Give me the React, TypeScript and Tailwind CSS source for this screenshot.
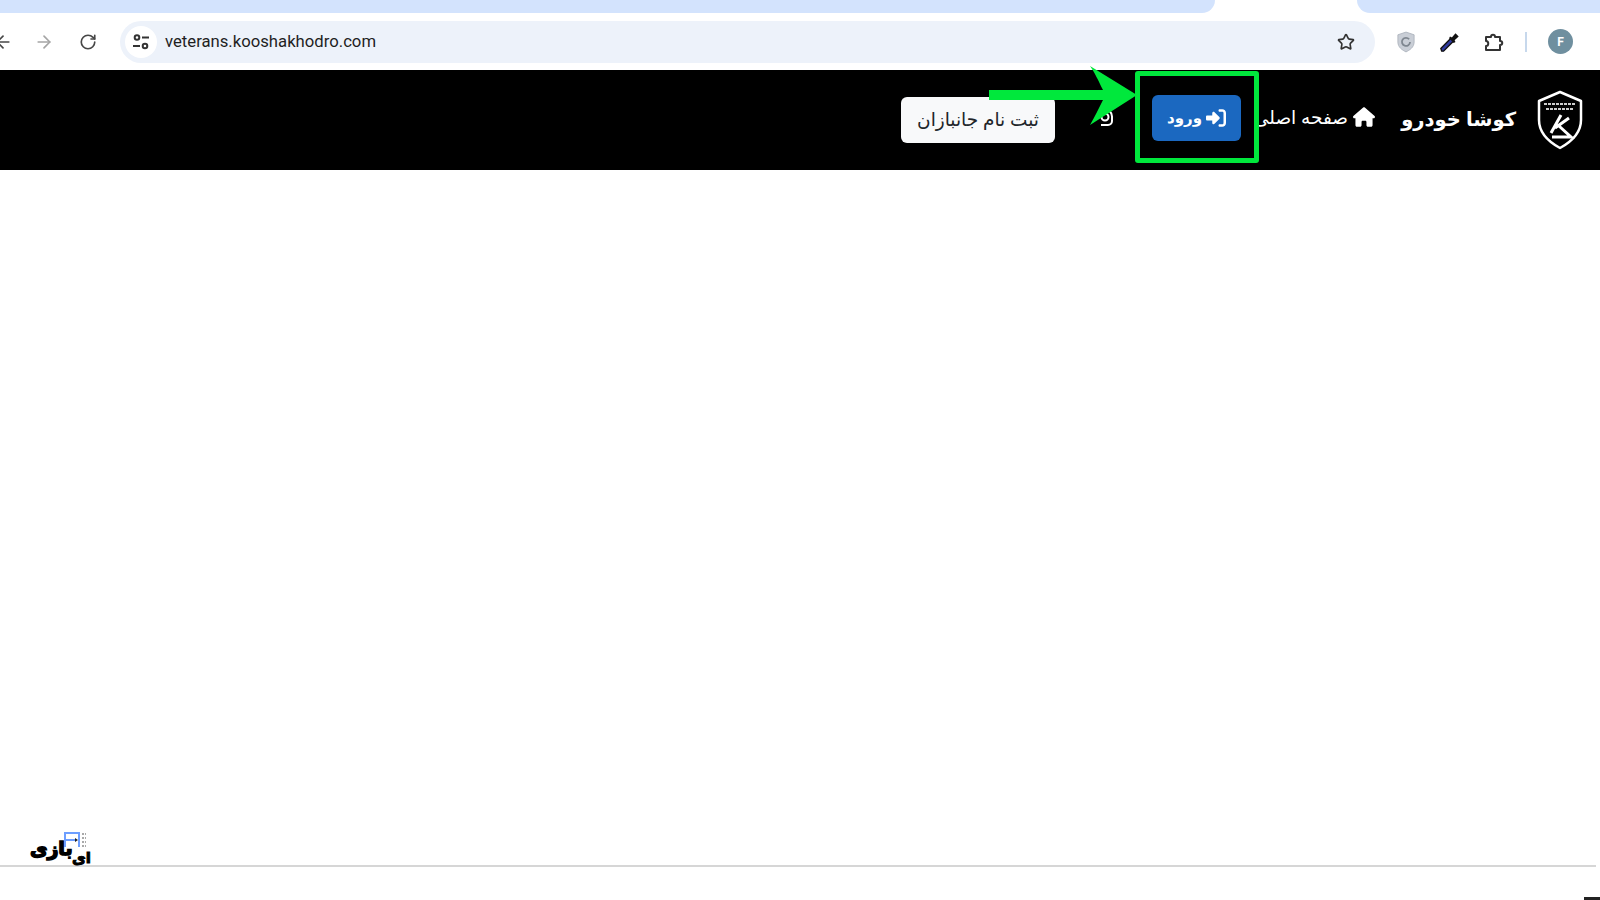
import { ArrowLeft, ArrowRight, RotateCw, Star } from "lucide-react";
import { FaHouse, FaRightToBracket } from "react-icons/fa6";

const farsi = { fontFamily: '"Noto Sans", "DejaVu Sans", sans-serif' };

const ShieldLogo = () => (
  <svg viewBox="0 0 46 60" className="w-[46px] h-[60px]" fill="none" stroke="white">
    <path d="M23 2 L44 11 V30 C44 43 34 52 23 58 C12 52 2 43 2 30 V11 Z" strokeWidth="2.5" strokeLinejoin="round" />
    <path d="M7 14 H39 M9 19 H37" strokeWidth="2" strokeDasharray="3 1" opacity="0.8" />
    <path d="M14 43 L24 25 M18 38 L32 28 M22 36 L34 47 H15" strokeWidth="3" />
  </svg>
);

const SiteIcon = () => (
  <svg viewBox="0 0 18 18" className="w-[18px] h-[18px]" fill="none" stroke="#333" strokeWidth="2">
    <circle cx="5" cy="4.5" r="2.3" />
    <path d="M10 4.5 H17 M1 13 H8" />
    <circle cx="13" cy="13" r="2.3" />
  </svg>
);

const Dropper = () => (
  <svg viewBox="0 0 24 24" className="w-[22px] h-[22px]">
    <path d="M3 22 L2 19 L13 8 L16 11 L5 22 Z" fill="#2f3a9e" stroke="#111" strokeWidth="1.5" />
    <path d="M12 6 L14 7 L18 2.5 L21.5 6 L17 10 L18 12 L16 13 L11 8 Z" fill="#111" />
  </svg>
);

const ExtShield = () => (
  <svg viewBox="0 0 20 24" className="w-[18px] h-[22px]">
    <path d="M10 1 L19 4 V12 C19 18 14 21 10 23 C6 21 1 18 1 12 V4 Z" fill="#c9ced6" stroke="#aeb4bd" />
    <path d="M13.5 9 A4.5 4.5 0 1 0 14.5 12" fill="none" stroke="#7f8790" strokeWidth="2" />
  </svg>
);

const PuzzleIcon = () => (
  <svg viewBox="0 0 20 20" className="w-[20px] h-[20px]" fill="none" stroke="#333" strokeWidth="2" strokeLinejoin="round">
    <path d="M2 5 H7 C7 2 11 2 11 5 H16 V9 C19 9 19 13 16 13 V18 H2 V14 C5 14 5 9 2 9 Z" />
  </svg>
);

const NavUserIcon = () => (
  <svg viewBox="0 0 17 18" className="w-[17px] h-[18px]" fill="none" stroke="white" strokeWidth="2">
    <path d="M8.5 1 A7.5 7.5 0 0 1 16 8.5 V13 A4 4 0 0 1 12 17 H5" />
    <circle cx="9" cy="9" r="3.5" />
  </svg>
);

const Watermark = () => (
  <div className="absolute left-[30px] top-[830px] w-[70px] h-[42px]">
    <span
      className="absolute left-0 top-0 text-[19px] leading-[36px] font-black text-black whitespace-nowrap [-webkit-text-stroke:1.5px_black]"
      style={farsi}
      dir="rtl"
    >
      بازی
    </span>
    <span
      className="absolute left-[42px] top-[14px] text-[15px] leading-[26px] font-black text-black whitespace-nowrap [-webkit-text-stroke:1px_black]"
      style={farsi}
      dir="rtl"
    >
      ای
    </span>
    <svg viewBox="0 0 24 16" className="absolute left-[34px] top-[2px] w-[24px] h-[16px]" fill="none">
      <path d="M1 15 V1 H15 V15 M1 8 H12" stroke="#6d9eff" strokeWidth="2" />
      <path d="M11 6 L14 8 L11 10 Z" fill="#222" />
      <path d="M18 2 H22 M18 6 H22 M18 10 H22 M18 14 H22" stroke="#a9a9a9" strokeWidth="2" strokeDasharray="2 1" />
    </svg>
  </div>
);

const BrowserBar = () => (
  <>
    <div className="h-[13px] flex bg-white">
      <div className="w-[1215px] bg-[#d3e3fd] rounded-br-[14px]" />
      <div className="ml-auto w-[243px] bg-[#d3e3fd] rounded-bl-[14px]" />
    </div>
    <div className="h-[57px] flex items-center bg-white overflow-hidden" style={{ fontFamily: "Roboto, sans-serif" }}>
      <ArrowLeft size={20} className="-ml-[7px] text-[#474747]" />
      <ArrowRight size={20} className="ml-[21px] text-[#a5a5a5]" />
      <RotateCw size={18} className="ml-[25px] text-[#474747]" strokeWidth={2.2} />
      <div className="ml-[23px] w-[1255px] h-[42px] rounded-full bg-[#edf2fa] flex items-center pl-[5px] pr-[20px]">
        <div className="w-[32px] h-[32px] rounded-full bg-white flex items-center justify-center">
          <SiteIcon />
        </div>
        <span className="ml-[8px] mt-[1px] text-[16.7px] text-[#1f1f1f]">veterans.kooshakhodro.com</span>
        <Star size={18} className="ml-auto text-[#333]" strokeWidth={2.2} />
      </div>
      <div className="ml-[22px]"><ExtShield /></div>
      <div className="ml-[24px]"><Dropper /></div>
      <div className="ml-[23px]"><PuzzleIcon /></div>
      <div className="ml-[21px] w-[2px] h-[20px] bg-[#c7d8ec]" />
      <div className="ml-[21px] w-[25px] h-[25px] rounded-full bg-[#6f8f9f] text-white text-[12px] font-bold flex items-center justify-center">F</div>
    </div>
  </>
);

const NavBar = () => (
  <nav dir="rtl" className="relative h-[100px] bg-black flex items-center pr-[17px] text-white" style={farsi}>
    <ShieldLogo />
    <span className="mr-[21px] w-[114px] text-[19.5px] font-bold whitespace-nowrap -mt-[2px]">کوشا خودرو</span>
    <a className="mr-[27px] w-[123px] flex items-center gap-[5px] text-[18.5px] font-medium whitespace-nowrap -mt-[7px]">
      <FaHouse size={22} />
      صفحه اصلی
    </a>
    <button className="relative z-20 mr-[11px] w-[89px] h-[46px] rounded-[6px] bg-[#1b68c0] flex items-center justify-center gap-[4px] text-[15px] font-bold -mt-[5px]">
      <FaRightToBracket size={20} />
      ورود
    </button>
    <div className="mr-[39px] -mt-[6px]"><NavUserIcon /></div>
    <button className="mr-[41px] w-[154px] h-[46px] pb-[3px] rounded-[6px] bg-[#f8f9fa] text-[#212529] text-[18.5px] whitespace-nowrap">
      ثبت نام جانبازان
    </button>

    {/* annotation: green box and arrow */}
    <div className="absolute z-10 left-[1135px] top-[1px] w-[124px] h-[92px] bg-black border-[5px] border-[#00e83c] rounded-[3px]" />
    <svg className="absolute z-10 left-[985px] top-[-6px] w-[156px] h-[64px]" viewBox="0 0 156 64">
      <path d="M4 26 H118 C113 16 110 9 105 2 L152 31 L105 61 C110 52 114 44 118 36 H4 Z" fill="#00e83c" />
    </svg>
  </nav>
);

export default function App() {
  return (
    <div className="relative h-[900px] w-full bg-white overflow-hidden flex flex-col">
      <BrowserBar />
      <NavBar />
      <div className="h-[695px]" />
      <div className="w-[1596px] h-[2px] bg-[#d6d6d6]" />
      <div className="mt-auto self-end w-[16px] h-[3px] bg-[#222]" />
      <Watermark />
    </div>
  );
}
